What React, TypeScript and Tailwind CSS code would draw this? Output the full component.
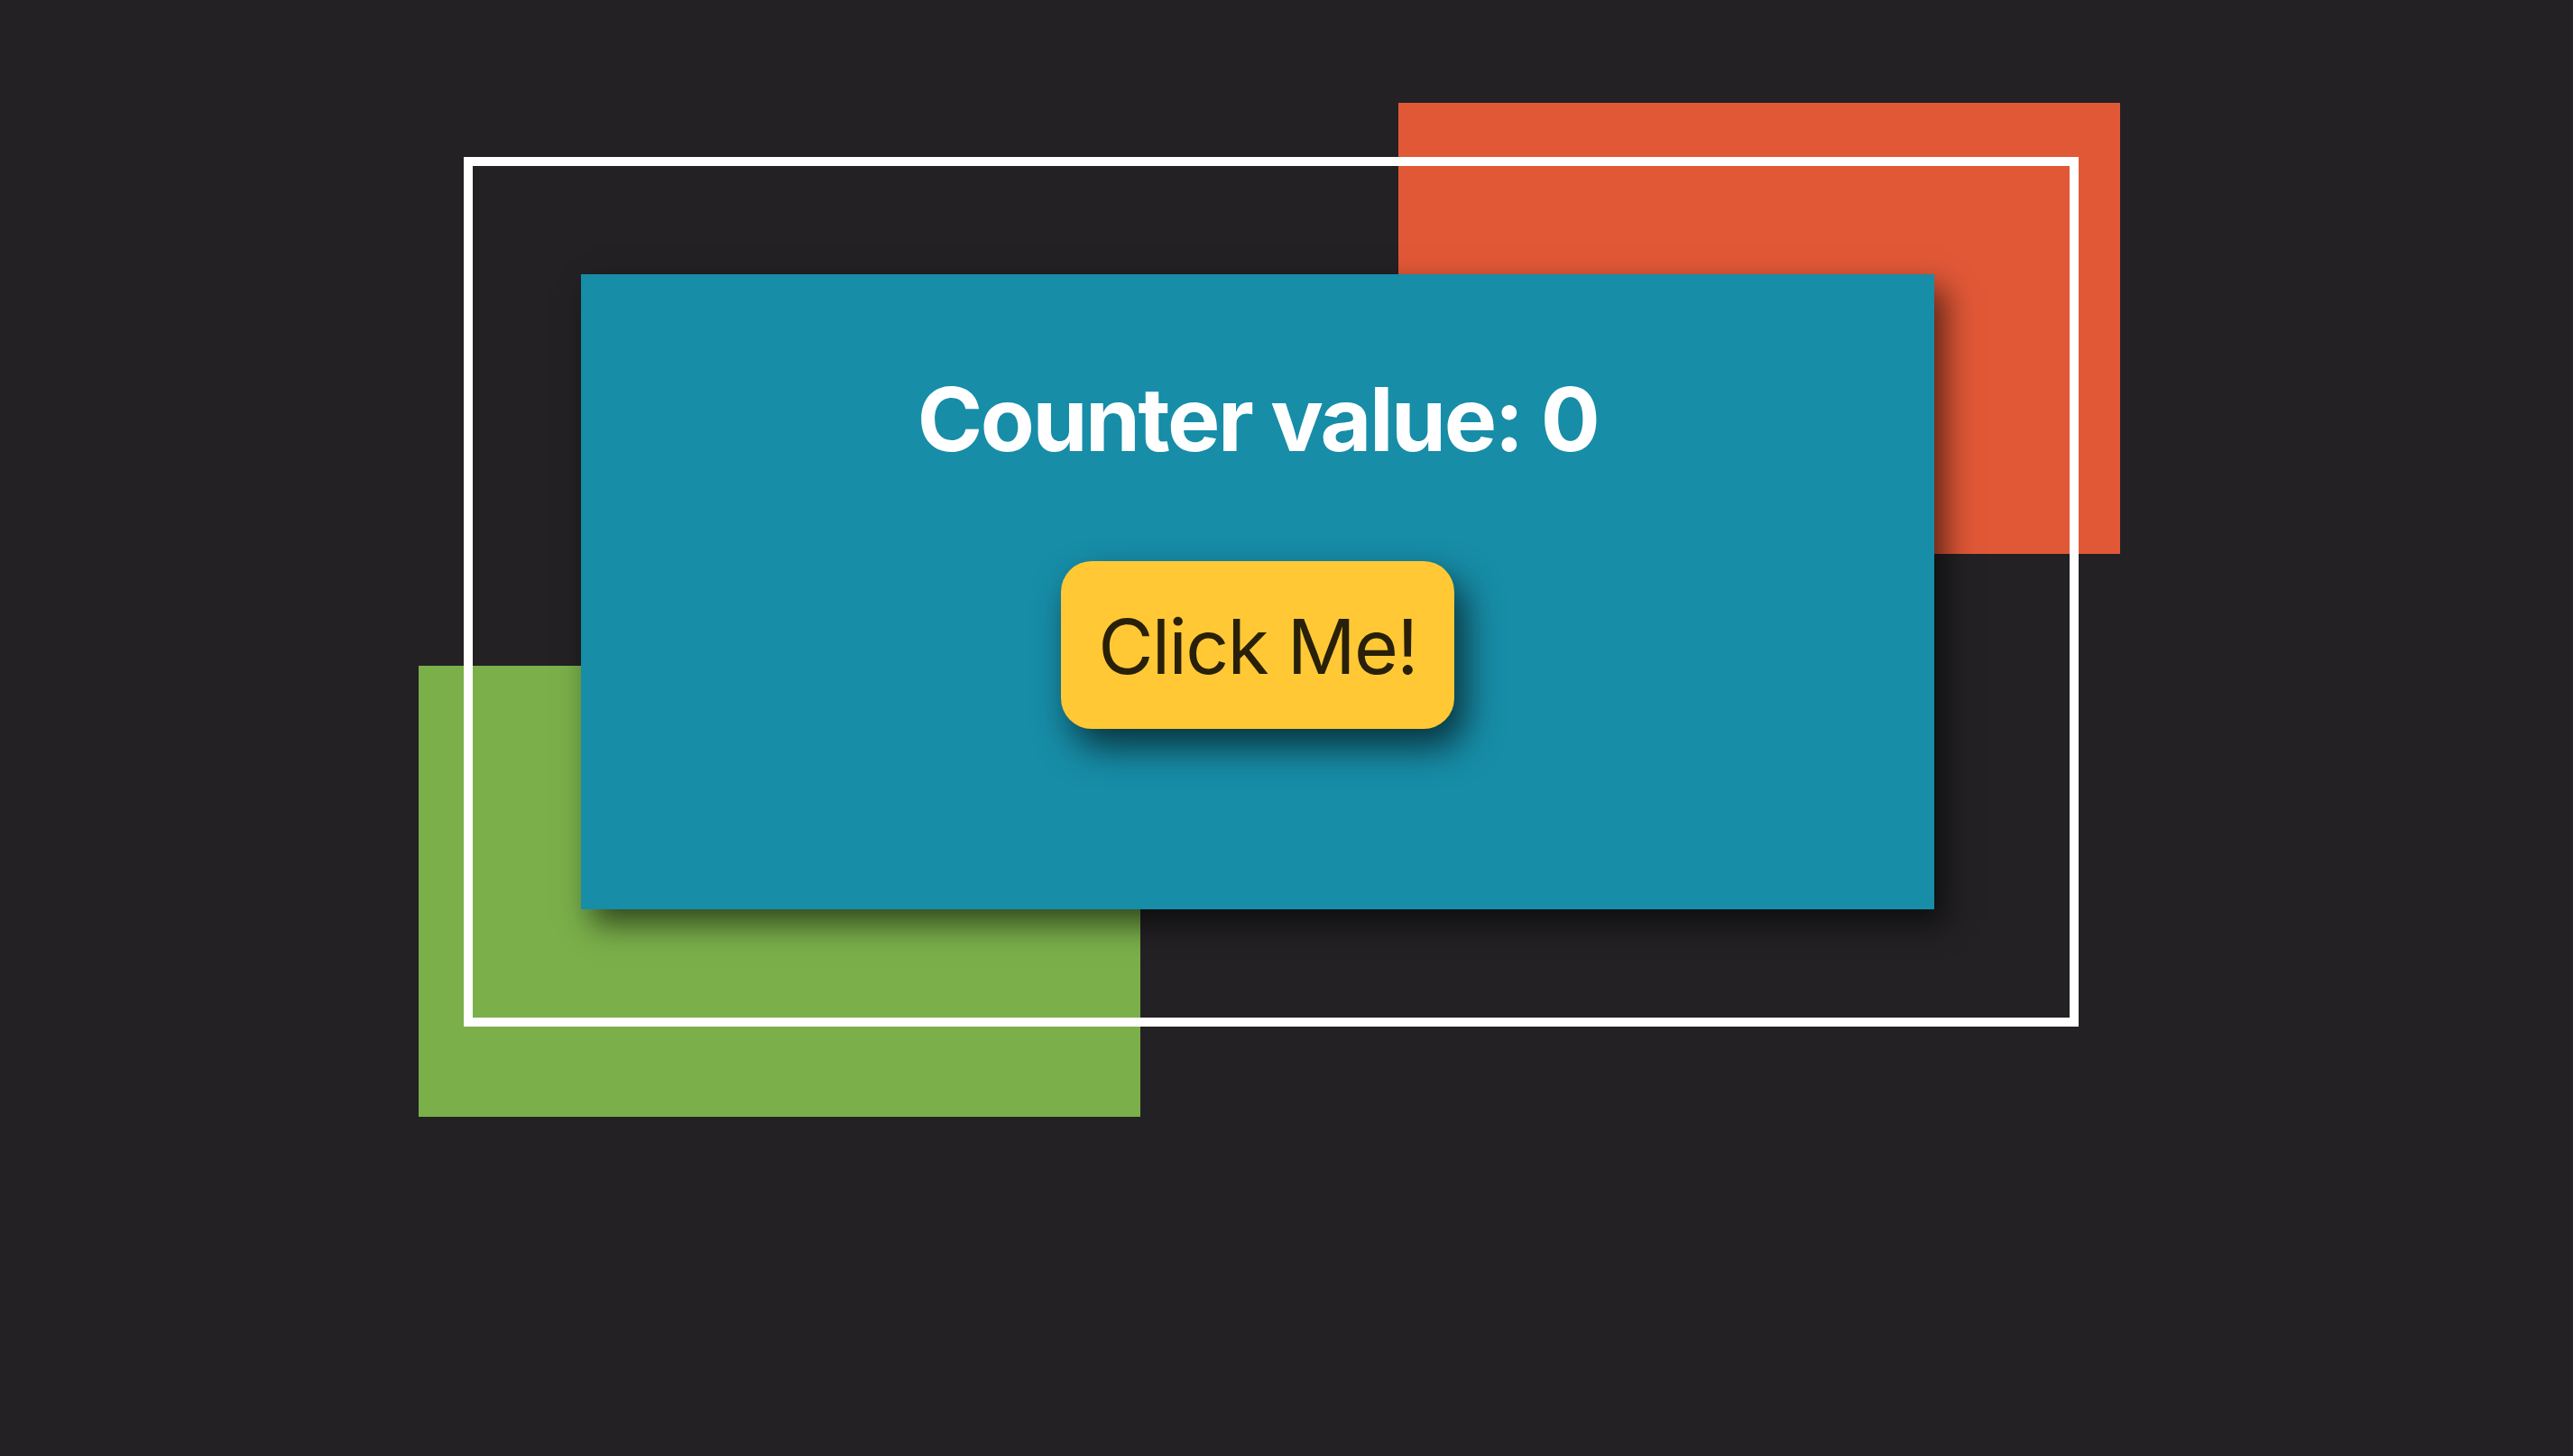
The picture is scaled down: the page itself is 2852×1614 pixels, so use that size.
import { useState } from "react";

export default function App() {
  const [count, setCount] = useState(0);

  return (
    <div
      className="min-h-screen bg-[#232124] pl-[644px] pt-[304px]"
      style={{ fontFamily: "Inter, 'Noto Sans', sans-serif" }}
    >
      <div className="relative h-[704px] w-[1500px]">
        {/* decorative blocks */}
        <div className="absolute left-[906px] top-[-190px] h-[500px] w-[800px] bg-[#e15837]" />
        <div className="absolute left-[-180px] top-[434px] h-[500px] w-[800px] bg-[#7aaf4a]" />
        <div className="absolute left-[-130px] top-[-130px] h-[964px] w-[1790px] border-[10px] border-white" />

        {/* counter card */}
        <div className="relative flex h-full w-full flex-col items-center bg-[#178da8] pt-[112px] shadow-[12px_16px_32px_rgba(0,0,0,0.6)]">
          <h1 className="text-[98px] font-bold leading-none tracking-tight text-white">
            Counter value: {count}
          </h1>
          <button
            onClick={() => setCount((c) => c + 1)}
            className="mt-[108px] flex h-[186px] w-[436px] items-center justify-center rounded-[34px] bg-[#ffc834] pt-[4px] text-[84px] leading-none tracking-[-0.02em] text-[#282008] shadow-[12px_20px_40px_rgba(0,0,0,0.65)]"
          >
            Click Me!
          </button>
        </div>
      </div>
    </div>
  );
}
